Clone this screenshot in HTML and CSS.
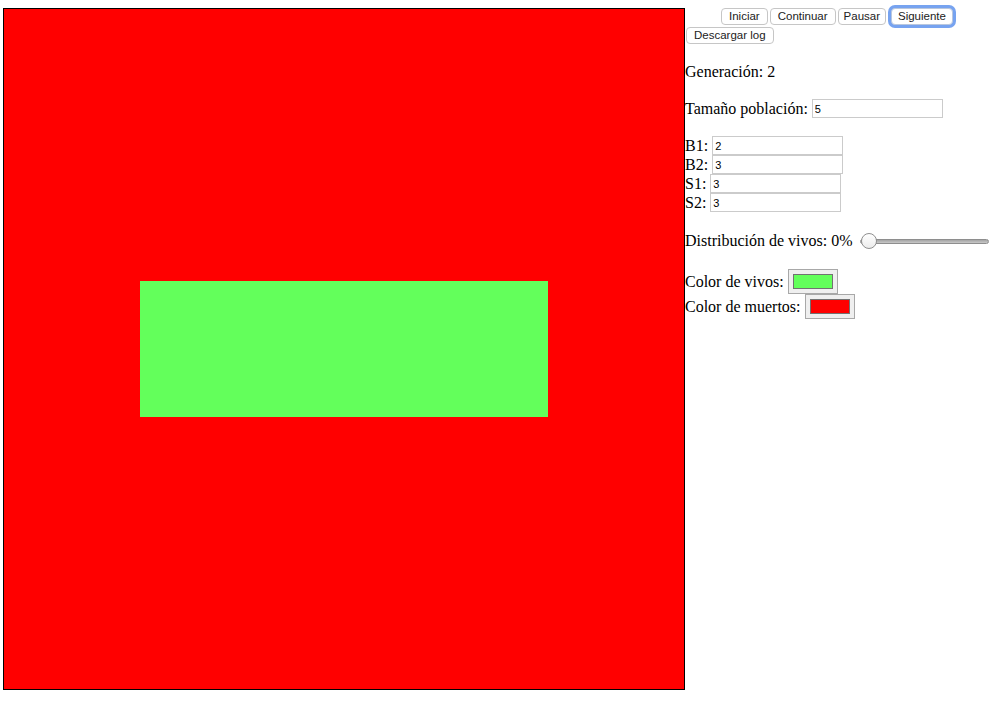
FILE: index.html
```html
<!DOCTYPE html>
<html lang="es">
<head>
<meta charset="utf-8">
<title>Juego de la vida</title>
<link rel="stylesheet" href="styles.css">
</head>
<body>
<div class="app">
  <div class="board">
    <div class="cell dead"></div><div class="cell dead"></div><div class="cell dead"></div><div class="cell dead"></div><div class="cell dead"></div>
    <div class="cell dead"></div><div class="cell dead"></div><div class="cell dead"></div><div class="cell dead"></div><div class="cell dead"></div>
    <div class="cell dead"></div><div class="cell alive"></div><div class="cell alive"></div><div class="cell alive"></div><div class="cell dead"></div>
    <div class="cell dead"></div><div class="cell dead"></div><div class="cell dead"></div><div class="cell dead"></div><div class="cell dead"></div>
    <div class="cell dead"></div><div class="cell dead"></div><div class="cell dead"></div><div class="cell dead"></div><div class="cell dead"></div>
  </div>
  <div class="panel">
    <div class="controls">
      <button class="btn">Iniciar</button>
      <button class="btn">Continuar</button>
      <button class="btn btn-narrow">Pausar</button>
      <button class="btn btn-focus">Siguiente</button>
    </div>
    <div class="controls controls-secondary">
      <button class="btn">Descargar log</button>
    </div>
    <p class="stat">Generación: 2</p>
    <div class="field field-size"><label>Tamaño población:</label><input class="text-input" type="text" value="5"></div>
    <div class="rules">
      <div class="field"><label>B1:</label><input class="text-input" type="text" value="2"></div>
      <div class="field"><label>B2:</label><input class="text-input" type="text" value="3"></div>
      <div class="field"><label>S1:</label><input class="text-input" type="text" value="3"></div>
      <div class="field"><label>S2:</label><input class="text-input" type="text" value="3"></div>
    </div>
    <div class="field field-range"><label>Distribución de vivos: 0%</label><input class="range" type="range" min="0" max="100" value="0"></div>
    <div class="colors">
      <div class="field field-color"><label>Color de vivos:</label><input class="swatch" type="color" value="#63ff5b"></div>
      <div class="field field-color"><label>Color de muertos:</label><input class="swatch" type="color" value="#ff0000"></div>
    </div>
  </div>
</div>
</body>
</html>
```
FILE: styles.css
```css
html, body {
  margin: 0;
  padding: 0;
  background: #ffffff;
}

body {
  font-family: "Liberation Serif", "Times New Roman", serif;
  font-size: 16px;
  color: #000;
}

.app {
  display: flex;
  align-items: flex-start;
  padding: 8px 0 0 3px;
}

.board {
  display: grid;
  grid-template-columns: repeat(5, 136px);
  grid-template-rows: repeat(5, 136px);
  border: 1px solid #000;
  flex: none;
}

.cell.dead {
  background: #ff0000;
}

.cell.alive {
  background: #63ff5b;
}

.panel {
  flex: 1;
  margin-top: -8px;
}

.controls {
  display: flex;
  gap: 2px;
  padding-left: 36px;
  margin-top: 8px;
}

.controls-secondary {
  padding-left: 1px;
  margin-top: 2px;
}

.btn {
  font-family: "Liberation Sans", Helvetica, Arial, sans-serif;
  font-size: 11.5px;
  color: #222;
  background: #fff;
  border: 1px solid #c6c6c6;
  border-radius: 4px;
  height: 17px;
  padding: 0 7px;
  line-height: 15px;
  margin: 0;
}

.btn-narrow {
  padding: 0 5px;
}

.btn-focus {
  margin-left: 3px;
  padding: 0 6px;
  border-color: #b9c7de;
  box-shadow: 0 0 0 3px #77a3f0;
}

.stat {
  margin: 19px 0 0;
  line-height: 18px;
}

.field {
  display: flex;
  align-items: center;
  gap: 4px;
  height: 19px;
}

.field label {
  line-height: 18px;
  white-space: nowrap;
}

.field-size {
  margin-top: 18px;
}

.rules {
  margin-top: 18px;
}

.text-input {
  box-sizing: border-box;
  width: 131px;
  height: 19px;
  margin: 0;
  padding: 0 2px;
  border: 1px solid #cbcbcb;
  border-radius: 0;
  font-family: "Liberation Sans", Helvetica, Arial, sans-serif;
  font-size: 11px;
  color: #000;
  background: #fff;
  outline: none;
}

.field-range {
  margin-top: 20px;
  height: 18px;
}

.range {
  -webkit-appearance: none;
  appearance: none;
  width: 129px;
  height: 16px;
  margin: 0 0 0 3px;
  background: transparent;
}

.range::-webkit-slider-runnable-track {
  box-sizing: border-box;
  height: 5px;
  border: 1px solid #8e8e8e;
  border-radius: 3px;
  background: linear-gradient(#a4a4a4, #c8c8c8);
}

.range::-webkit-slider-thumb {
  -webkit-appearance: none;
  appearance: none;
  box-sizing: border-box;
  width: 16px;
  height: 16px;
  margin-top: -6.5px;
  border-radius: 50%;
  border: 1px solid #8f8f8f;
  background: linear-gradient(#ffffff, #ececec);
}

.colors {
  margin-top: 19px;
}

.field-color {
  height: 25px;
}

.swatch {
  -webkit-appearance: none;
  appearance: none;
  box-sizing: border-box;
  width: 50px;
  height: 25px;
  margin: 0;
  padding: 0;
  border: 1px solid #a8a8a8;
  border-radius: 0;
  background: #efefef;
}

.swatch::-webkit-color-swatch-wrapper {
  padding: 4px;
}

.swatch::-webkit-color-swatch {
  border: 1px solid #727272;
  border-radius: 0;
}
```
